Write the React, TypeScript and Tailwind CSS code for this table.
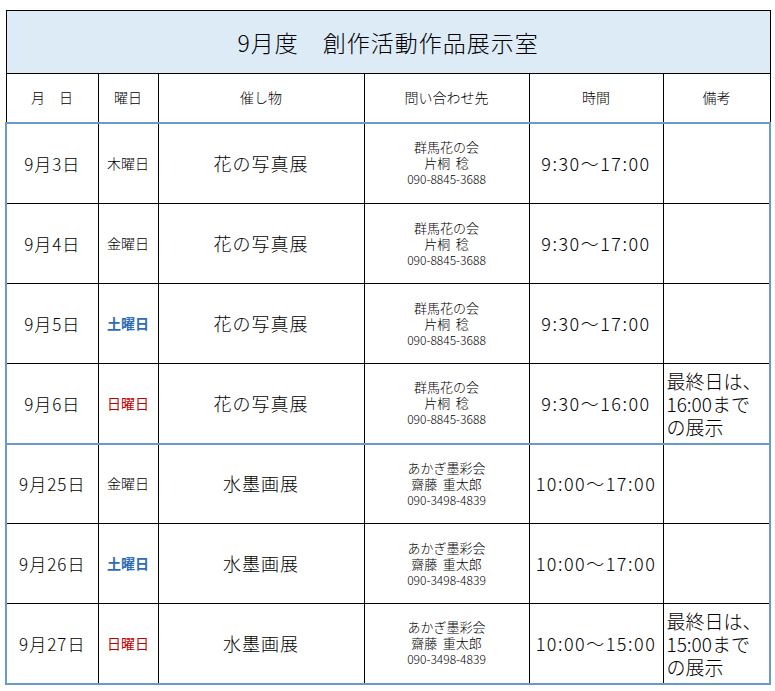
const rows = [
  { date: '9月3日', day: '木曜日', kind: 'weekday', event: '花の写真展', org: '群馬花の会', person: '片桐  稔', tel: '090-8845-3688', time: '9:30〜17:00', note: '' },
  { date: '9月4日', day: '金曜日', kind: 'weekday', event: '花の写真展', org: '群馬花の会', person: '片桐  稔', tel: '090-8845-3688', time: '9:30〜17:00', note: '' },
  { date: '9月5日', day: '土曜日', kind: 'sat', event: '花の写真展', org: '群馬花の会', person: '片桐  稔', tel: '090-8845-3688', time: '9:30〜17:00', note: '' },
  { date: '9月6日', day: '日曜日', kind: 'sun', event: '花の写真展', org: '群馬花の会', person: '片桐  稔', tel: '090-8845-3688', time: '9:30〜16:00', note: '16:00まで' },
  { date: '9月25日', day: '金曜日', kind: 'weekday', event: '水墨画展', org: 'あかぎ墨彩会', person: '齋藤  重太郎', tel: '090-3498-4839', time: '10:00〜17:00', note: '' },
  { date: '9月26日', day: '土曜日', kind: 'sat', event: '水墨画展', org: 'あかぎ墨彩会', person: '齋藤  重太郎', tel: '090-3498-4839', time: '10:00〜17:00', note: '' },
  { date: '9月27日', day: '日曜日', kind: 'sun', event: '水墨画展', org: 'あかぎ墨彩会', person: '齋藤  重太郎', tel: '090-3498-4839', time: '10:00〜15:00', note: '15:00まで' },
];

type Row = (typeof rows)[number];

const cell = 'border border-black text-center align-middle p-0';

function DataRow({ r, first }: { r: Row; first?: boolean }) {
  const dayClass =
    r.kind === 'sat'
      ? 'text-[#2e6db4] font-bold'
      : r.kind === 'sun'
        ? 'text-[#c00000] font-normal'
        : 'text-black';
  return (
    <tr className={first ? 'h-[81px]' : 'h-[80px]'}>
      <td className={`${cell} text-[17px] tracking-[1px]`}>{r.date}</td>
      <td className={`${cell} text-[14px] ${dayClass}`}>{r.day}</td>
      <td className={`${cell} text-[18px] tracking-[1px]`}>{r.event}</td>
      <td className={`${cell} text-[13px] leading-[16px] whitespace-pre`}>
        <div>{r.org}</div>
        <div>{r.person}</div>
        <div className="text-[12px]">{r.tel}</div>
      </td>
      <td className={`${cell} text-[18px] tracking-[1.5px]`}>{r.time}</td>
      <td className={`${cell} text-left text-[19px] leading-[23px] px-[3px]`}>
        {r.note && (
          <>
            <div>最終日は、</div>
            <div>{r.note}</div>
            <div>の展示</div>
          </>
        )}
      </td>
    </tr>
  );
}

export default function App() {
  return (
    <div className="bg-white min-h-screen pt-[10px] pl-[5px] text-black font-light font-['Noto_Sans_CJK_JP','Noto_Sans',sans-serif]">
      <table className="w-[764px] table-fixed border-collapse">
        <colgroup>
          <col className="w-[92px]" />
          <col className="w-[60px]" />
          <col className="w-[206px]" />
          <col className="w-[165px]" />
          <col className="w-[134px]" />
          <col className="w-[107px]" />
        </colgroup>
        <thead>
          <tr className="h-[63px]">
            <th colSpan={6} className="border border-black bg-[#ddebf7] text-[23px] font-light tracking-[1px]">
              9月度　創作活動作品展示室
            </th>
          </tr>
          <tr className="h-[49px]">
            <th className={`${cell} text-[14px] font-light`}>月　日</th>
            <th className={`${cell} text-[14px] font-light`}>曜日</th>
            <th className={`${cell} text-[14px] font-light`}>催し物</th>
            <th className={`${cell} text-[14px] font-light`}>問い合わせ先</th>
            <th className={`${cell} text-[14px] font-light`}>時間</th>
            <th className={`${cell} text-[14px] font-light`}>備考</th>
          </tr>
        </thead>
        <tbody className="border-2 border-[#6a9acb]">
          {rows.slice(0, 4).map((r, i) => (
            <DataRow key={r.date} r={r} first={i === 0} />
          ))}
        </tbody>
        <tbody className="border-2 border-[#6a9acb]">
          {rows.slice(4).map((r) => (
            <DataRow key={r.date} r={r} />
          ))}
        </tbody>
      </table>
    </div>
  );
}
